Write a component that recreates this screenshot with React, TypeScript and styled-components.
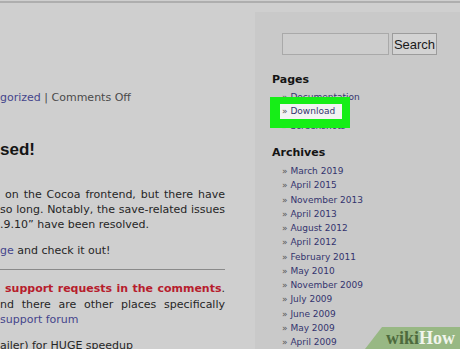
import React from "react";
import styled, { createGlobalStyle } from "styled-components";

const GlobalStyle = createGlobalStyle`
  html, body {
    margin: 0;
    padding: 0;
    background: #cfcfcf;
  }
`

const Page = styled.div`
  position: relative;
  width: 460px;
  height: 349px;
  overflow: hidden;
  background: #cfcfcf;
  padding-top: 1px;
  box-sizing: border-box;
  font-family: "DejaVu Sans", Verdana, sans-serif;
  color: #262626;
`

const TopRule = styled.div`
  height: 2px;
  background: #aeaeae;
`

const Columns = styled.div`
  display: flex;
  align-items: flex-start;
`

const Main = styled.div`
  width: 225px;
  margin-right: 30px;
  padding-top: 87px;
  font-size: 11px;
`

const Meta = styled.div`
  line-height: 15px;
  color: #4a4a4a;
  white-space: nowrap;
`

const Link = styled.a`
  color: #45458c;
  text-decoration: none;
`

const Title = styled.h2`
  margin: 35px 0 0;
  font-family: "Liberation Sans", Arial, sans-serif;
  font-size: 17px;
  line-height: 20px;
  font-weight: bold;
  color: #151515;
`

const Paragraph = styled.div<{ $gap: number; $lh?: number }>`
  margin-top: ${(p) => p.$gap}px;
  line-height: ${(p) => p.$lh ?? 15}px;
`

const Line = styled.div<{ $justify?: boolean; $indent?: number }>`
  white-space: ${(p) => (p.$justify ? "normal" : "nowrap")};
  padding-left: ${(p) => p.$indent ?? 0}px;
  text-align: ${(p) => (p.$justify ? "justify" : "left")};
  text-align-last: ${(p) => (p.$justify ? "justify" : "left")};
`

const Rule = styled.hr`
  margin: 11px 0 0;
  border: 0;
  height: 1px;
  background: #8a8a8a;
`

const Warning = styled.strong`
  color: #b71d2d;
`

const Sidebar = styled.aside`
  flex: 1;
  margin-top: 9px;
  height: 340px;
  background: #c9c9c9;
  padding: 21px 0 0 17px;
  box-sizing: border-box;
`

const SearchRow = styled.form`
  display: flex;
  gap: 3px;
  padding-left: 10px;
  margin: 0;
`

const SearchInput = styled.input`
  width: 107px;
  height: 22px;
  box-sizing: border-box;
  border: 1px solid #a9a9a9;
  background: #cdcdcd;
  padding: 0;
`

const SearchButton = styled.button`
  width: 45px;
  height: 22px;
  padding: 0;
  border: 1px solid #9c9c9c;
  background: #d3d3d3;
  font-family: "Liberation Sans", Arial, sans-serif;
  font-size: 13px;
  color: #1a1a1a;
`

const Heading = styled.h3<{ $gap: number }>`
  margin: ${(p) => p.$gap}px 0 0;
  font-size: 11px;
  line-height: 14px;
  font-weight: bold;
  color: #141414;
`

const List = styled.ul<{ $gap: number; $lh: number }>`
  list-style: none;
  margin: ${(p) => p.$gap}px 0 0;
  padding-left: 10px;
  font-size: 9px;
  line-height: ${(p) => p.$lh}px;
`

const Item = styled.li`
  color: #555;
  white-space: nowrap;

  &::before {
    content: "» ";
  }
`

/* the green marker drawn over the list, around the Download entry */
const HotItem = styled.li`
  position: relative;
  z-index: 1;
  white-space: nowrap;

  &::after {
    content: "";
    position: absolute;
    left: -12px;
    top: -7px;
    width: 80px;
    height: 31px;
    background: #16ee17;
    z-index: -1;
  }
`

const HotLabel = styled.span`
  display: inline-block;
  margin-left: -2px;
  padding: 0 7px 0 2px;
  line-height: 15px;
  background: #f3f3f3;
  color: #555;

  &::before {
    content: "» ";
  }
`

const SideLink = styled.a`
  color: #34346e;
  text-decoration: none;
`

const Watermark = styled.div`
  position: absolute;
  right: 0;
  bottom: 0;
  width: 95px;
  height: 22px;
  background: #98b884;
  clip-path: polygon(17px 0, 100% 0, 100% 100%, 0 100%);
  display: flex;
  align-items: center;
  justify-content: flex-end;
  padding-right: 5px;
  box-sizing: border-box;
  font-family: "Liberation Serif", "Times New Roman", serif;
  font-weight: bold;
  font-size: 18px;
`

const Wiki = styled.span`
  color: #4d6a3d;
`

const How = styled.span`
  color: #f1f5ec;
`

const archives = [
  "March 2019",
  "April 2015",
  "November 2013",
  "April 2013",
  "August 2012",
  "April 2012",
  "February 2011",
  "May 2010",
  "November 2009",
  "July 2009",
  "June 2009",
  "May 2009",
  "April 2009",
]

const App = () => {
  return (
    <Page>
      <GlobalStyle />
      <TopRule />
      <Columns>
        <Main>
          <Meta>
            <Link>gorized</Link> | Comments Off
          </Meta>
          <Title>sed!</Title>
          <Paragraph $gap={27}>
            <Line $justify $indent={5}>on the Cocoa frontend, but there have</Line>
            <Line $justify>so long. Notably, the save-related issues</Line>
            <Line>.9.10” have been resolved.</Line>
          </Paragraph>
          <Paragraph $gap={11}>
            <Line>
              <Link>ge</Link> and check it out!
            </Line>
          </Paragraph>
          <Rule />
          <Paragraph $gap={11} $lh={15.5}>
            <Line $justify $indent={5}>
              <Warning>support requests in the comments</Warning>.
            </Line>
            <Line $justify>nd there are other places specifically</Line>
            <Line>
              <Link>support forum</Link>
            </Line>
          </Paragraph>
          <Paragraph $gap={10}>
            <Line>ailer) for HUGE speedup</Line>
          </Paragraph>
        </Main>
        <Sidebar>
          <SearchRow onSubmit={(e) => e.preventDefault()}>
            <SearchInput type="text" />
            <SearchButton type="submit">Search</SearchButton>
          </SearchRow>
          <Heading $gap={18}>Pages</Heading>
          <List $gap={3} $lh={14}>
            <Item><SideLink>Documentation</SideLink></Item>
            <HotItem>
              <HotLabel><SideLink>Download</SideLink></HotLabel>
            </HotItem>
            <Item><SideLink>Screenshots</SideLink></Item>
          </List>
          <Heading $gap={13}>Archives</Heading>
          <List $gap={4} $lh={14.25}>
            {archives.map((a) => (
              <Item key={a}><SideLink>{a}</SideLink></Item>
            ))}
          </List>
        </Sidebar>
      </Columns>
      <Watermark>
        <Wiki>wiki</Wiki>
        <How>How</How>
      </Watermark>
    </Page>
  );
};

export default App;
